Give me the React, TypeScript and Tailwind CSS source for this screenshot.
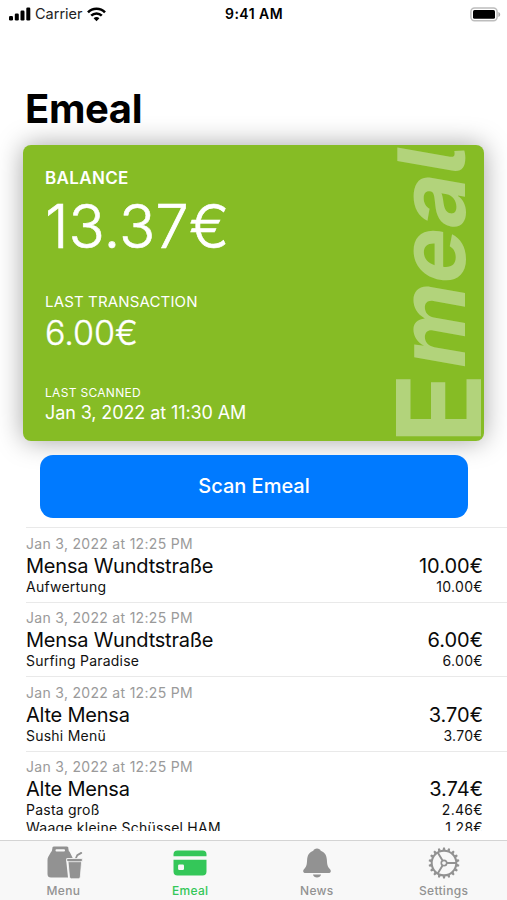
import React from "react";

type Item = { name: string; price: string };
type Transaction = { place: string; total: string; items: Item[] };

const transactions: Transaction[] = [
  { place: "Mensa Wundtstraße", total: "10.00€", items: [{ name: "Aufwertung", price: "10.00€" }] },
  { place: "Mensa Wundtstraße", total: "6.00€", items: [{ name: "Surfing Paradise", price: "6.00€" }] },
  { place: "Alte Mensa", total: "3.70€", items: [{ name: "Sushi Menü", price: "3.70€" }] },
  {
    place: "Alte Mensa",
    total: "3.74€",
    items: [
      { name: "Pasta groß", price: "2.46€" },
      { name: "Waage kleine Schüssel HAM", price: "1.28€" },
    ],
  },
];

function StatusBar() {
  return (
    <div className="grid h-7 shrink-0 grid-cols-3 items-center pr-1.5 pl-[9px] text-black">
      <div className="flex items-center">
        <svg width="22" height="14" viewBox="0 0 22 14">
          <rect x="0" y="9" width="4" height="4.5" rx="1.2" />
          <rect x="5.8" y="6.5" width="4" height="7" rx="1.2" />
          <rect x="11.5" y="3.5" width="4" height="10" rx="1.2" />
          <rect x="17.3" y="0.5" width="4" height="13" rx="1.2" />
        </svg>
        <span className="ml-1 text-[14.5px] leading-5 text-[#222]">Carrier</span>
        <svg className="ml-1" width="19" height="15" viewBox="0 0 19 15" fill="none" stroke="#000" strokeWidth="2.5">
          <path d="M1 5.3C5.6.4 13.4.4 18 5.3" />
          <path d="M4.2 8.7c3-3.1 7.6-3.1 10.6 0" />
          <path d="M9.5 14.2 6.6 11.3c1.7-1.6 4.1-1.6 5.8 0Z" fill="#000" stroke="none" />
        </svg>
      </div>
      <div className="-ml-0.5 text-center text-[14px] leading-5 font-semibold tracking-[0.45px]">9:41 AM</div>
      <svg className="justify-self-end" width="31" height="15" viewBox="0 0 31 15">
        <rect x="0.9" y="1.1" width="26.2" height="12.6" rx="3.6" fill="#fff" stroke="#bdbdbd" strokeWidth="1.5" />
        <rect x="3" y="3.1" width="22" height="8.7" rx="1.5" />
        <path d="M28.4 5c2.4.8 2.4 4.2 0 5Z" fill="#aaa" />
      </svg>
    </div>
  );
}

function Card() {
  return (
    <section className="relative mr-[23px] ml-[23px] h-[296px] shrink-0 rounded-[8px] bg-[#86bc25] pl-[22px] text-white shadow-[0_0_27px_rgba(0,0,0,0.36)]">
      <div className="pt-[22px] text-[17px] leading-[22px] font-semibold tracking-[0.35px]">BALANCE</div>
      <div className="mt-1 text-[60px] leading-[66px] font-light [-webkit-text-stroke:0.6px_white]">13.37€</div>
      <div className="mt-[33px] text-[15px] leading-5 tracking-[0.15px]">LAST TRANSACTION</div>
      <div className="mt-px text-[34px] leading-10 font-light [-webkit-text-stroke:0.4px_white]">6.00€</div>
      <div className="mt-[32px] text-[12px] leading-4 tracking-[0.3px]">LAST SCANNED</div>
      <div className="mt-px text-[18px] leading-[22px] tracking-[-0.1px]">Jan 3, 2022 at 11:30 AM</div>
      <svg className="absolute top-0 right-0" width="97" height="296" viewBox="0 0 97 296">
        <g className="[font-feature-settings:'cv05']" fill="#b2d37b" fontFamily="Inter, sans-serif" fontWeight="700">
          <text transform="translate(94 299) rotate(-90)" fontSize="117">E</text>
          <text transform="translate(78 227) rotate(-90) skewX(-10)" fontSize="93" textLength="222">meal</text>
        </g>
      </svg>
    </section>
  );
}

function Row({ t }: { t: Transaction }) {
  return (
    <div className="ml-[26px] h-[74.5px] shrink-0 border-t border-[#e9e9e9] pt-[5.5px] pr-6">
      <div className="text-[14px] leading-5 tracking-[0.3px] text-[#9a9a9a]">Jan 3, 2022 at 12:25 PM</div>
      <div className="flex justify-between text-[20px] leading-6 text-[#0a0a0a]">
        <span className="tracking-[-0.22px]">{t.place}</span>
        <span>{t.total}</span>
      </div>
      {t.items.map((i) => (
        <div key={i.name} className="flex justify-between text-[14px] leading-[17.5px] text-[#111]">
          <span className="tracking-[0.23px]">{i.name}</span>
          <span className="tracking-[0.3px]">{i.price}</span>
        </div>
      ))}
    </div>
  );
}

function MenuIcon() {
  return (
    <svg className="ml-[3px]" width="36" height="34" viewBox="0 0 36 34" fill="#929292">
      <path d="M5.5 1.5Q5.7.5 7 .5h12.500q1.500 0 1.700 1L22 6H4.700Z" />
      <path d="M4.300 5.500h18.200l3.200 6.500h-4.200q-2.600 0-2.300 2.600L21 31.500H4Q.5 31.500.5 28V14q0-1.700.8-3.200Z" />
      <rect x="8.500" y="3.300" width="9.500" height="2.200" rx="1" fill="#f8f8f8" />
      <path d="m28.800 12.500 1.500-3.300 4-2.300" fill="none" stroke="#929292" strokeWidth="1.800" strokeLinecap="round" />
      <path d="M19.800 12.500h15.500v3h-.7L33.300 31q-.2 1.800-2 1.800h-6.800q-1.800 0-2-1.800l-1.500-15.500h-1.200Z" stroke="#f8f8f8" strokeWidth=".8" />
      <path d="M20.500 15.700h14.500" stroke="#f8f8f8" strokeWidth=".8" />
    </svg>
  );
}

function CardIcon() {
  return (
    <svg width="34" height="26" viewBox="0 0 34 26" fill="#34c759">
      <path d="M.5 6.300V4.500q0-4 4-4h25q4 0 4 4v1.800Z" />
      <path fillRule="evenodd" d="M.5 9.800h33v11.700q0 4-4 4h-25q-4 0-4-4Zm5.800 4.700q-1.200 0-1.200 1.200v3q0 1.200 1.200 1.200h3.500q1.200 0 1.200-1.200v-3q0-1.200-1.200-1.200Z" />
    </svg>
  );
}

function BellIcon() {
  return (
    <svg className="ml-px" width="28" height="30" viewBox="0 0 28 30" fill="#929292">
      <path d="M14 .5c2 0 3.200 1 3.700 2.200 4.300 1.700 6 4.800 6.200 9.300.2 5 .9 6.700 2.700 8.700 1 1.100 1.200 1.700 1.200 2.500 0 1.200-.9 1.800-2.200 1.800H2.400C1.100 25 .2 24.400.2 23.200c0-.8.2-1.400 1.200-2.500 1.800-2 2.500-3.700 2.700-8.700.2-4.500 1.900-7.600 6.200-9.300C10.800 1.500 12 .5 14 .5Z" />
      <path d="M10 26.600h8c-.4 4-7.600 4-8 0Z" />
    </svg>
  );
}

const teeth = Array.from({ length: 18 }, (_, i) => i * 20);

function GearIcon() {
  return (
    <svg width="32" height="32" viewBox="-16 -16 32 32" fill="none" stroke="#929292">
      <circle r="12.300" strokeWidth="2" />
      {teeth.map((a) => (
        <path key={a} d="M-1.500-12.800-.9-15.400H.9L1.500-12.800Z" fill="#929292" stroke="none" transform={`rotate(${a})`} />
      ))}
      <circle r="2.700" strokeWidth="1.700" />
      <path d="M3 0h9M-1.600-2.700l-4.700-7.900M-1.600 2.700l-4.700 7.900" strokeWidth="1.900" />
    </svg>
  );
}

function Tab({ label, active, children }: { label: string; active?: boolean; children: React.ReactNode }) {
  return (
    <div className={active ? "flex flex-col items-center text-[#34c759]" : "flex flex-col items-center text-[#929292]"}>
      <div className="flex h-[42px] items-center justify-center pt-0.5">{children}</div>
      <span className="text-[12px] leading-4 font-medium tracking-[0.3px]">{label}</span>
    </div>
  );
}

export default function App() {
  return (
    <main className="flex h-[900px] w-[507px] flex-col overflow-hidden bg-white font-['Inter','Liberation_Sans',sans-serif]">
      <StatusBar />
      <h1 className="mt-[56px] mb-[11px] ml-[25px] text-[40px] leading-[50px] font-bold tracking-[-0.4px]">Emeal</h1>
      <Card />
      <button className="z-10 mt-[13.5px] mr-[39px] ml-[40px] h-[63.5px] shrink-0 rounded-[13px] bg-[#007aff] text-[20px] font-medium text-white">
        Scan Emeal
      </button>
      <div className="mt-[9px] h-[304px] shrink-0 overflow-hidden">
        {transactions.map((t, i) => (
          <Row key={i} t={t} />
        ))}
      </div>
      <nav className="mt-auto grid h-[60px] shrink-0 grid-cols-4 border-t border-[#d4d4d4] bg-[#f8f8f8]">
        <Tab label="Menu"><MenuIcon /></Tab>
        <Tab label="Emeal" active><CardIcon /></Tab>
        <Tab label="News"><BellIcon /></Tab>
        <Tab label="Settings"><GearIcon /></Tab>
      </nav>
    </main>
  );
}
